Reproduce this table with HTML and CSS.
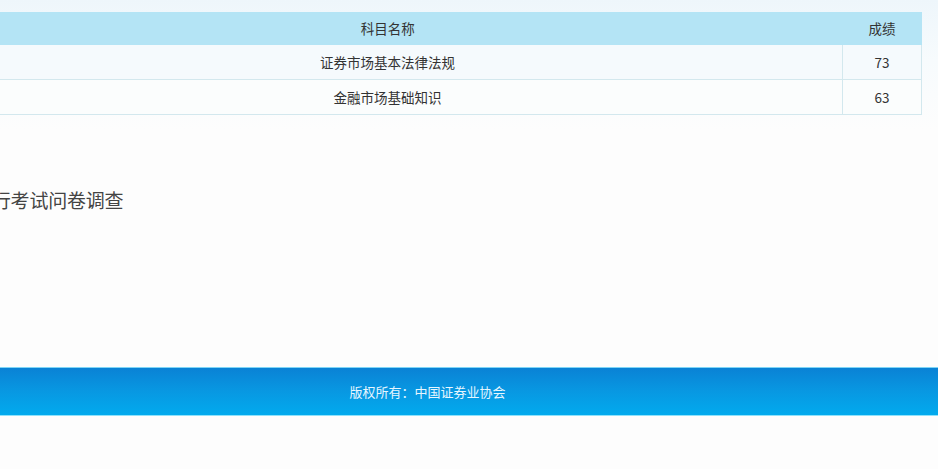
FILE: index.html
```html
<!DOCTYPE html>
<html lang="zh-CN">
<head>
<meta charset="utf-8">
<title>成绩查询</title>
<link rel="stylesheet" href="styles.css">
</head>
<body>
<div class="top">
  <div class="page">
    <table class="score">
      <thead>
        <tr><th class="name">科目名称</th><th class="val">成绩</th></tr>
      </thead>
      <tbody>
        <tr class="odd"><td class="name">证券市场基本法律法规</td><td class="val">73</td></tr>
        <tr class="even"><td class="name">金融市场基础知识</td><td class="val">63</td></tr>
      </tbody>
    </table>
    <div class="survey">进行考试问卷调查</div>
  </div>
</div>
<footer class="footer">
  <div class="page footer-inner">版权所有：中国证券业协会</div>
</footer>
</body>
</html>
```

FILE: styles.css
```css
html, body {
  margin: 0;
  padding: 0;
}
body {
  background: #fdfdfd;
  font-family: "Noto Sans CJK SC", "Noto Sans", sans-serif;
  color: #333;
  overflow: hidden;
  width: 938px;
}
.top {
  background: linear-gradient(to bottom, #eef6fb 0px, #f7fbfd 60px, #fdfdfd 130px);
  padding-top: 12px;
  height: 355px;
  box-sizing: border-box;
}
.page {
  width: 989px;
  margin-left: -67px;
}
.score {
  width: 989px;
  border-collapse: collapse;
  font-size: 13.5px;
}
.score th {
  background: #b4e4f5;
  font-weight: normal;
  height: 31px;
  padding: 0 0 2px;
  color: #333;
}
.score td {
  height: 34px;
  padding: 0;
  text-align: center;
  border-bottom: 1px solid #d3e8ee;
}
.score td.val {
  border-left: 1px solid #d3e8ee;
  border-right: 1px solid #d3e8ee;
}
.score .val {
  width: 78px;
}
.odd td { background: #f5fafd; }
.even td { background: #fbfdfd; }
.survey {
  margin-top: 72px;
  margin-left: 40px;
  font-size: 19px;
  color: #444;
  line-height: 26px;
  letter-spacing: -0.2px;
}
.footer {
  margin-top: 12px;
  height: 49px;
  border-top: 1px solid #7fd6f6;
  border-bottom: 1px solid #8fe2fb;
  background: linear-gradient(to bottom, #0a82d5 0%, #0898e2 50%, #02aaee 100%);
  box-sizing: border-box;
}
.footer-inner {
  text-align: center;
  line-height: 47px;
  font-size: 13px;
  color: #e6f6ff;
}
```
